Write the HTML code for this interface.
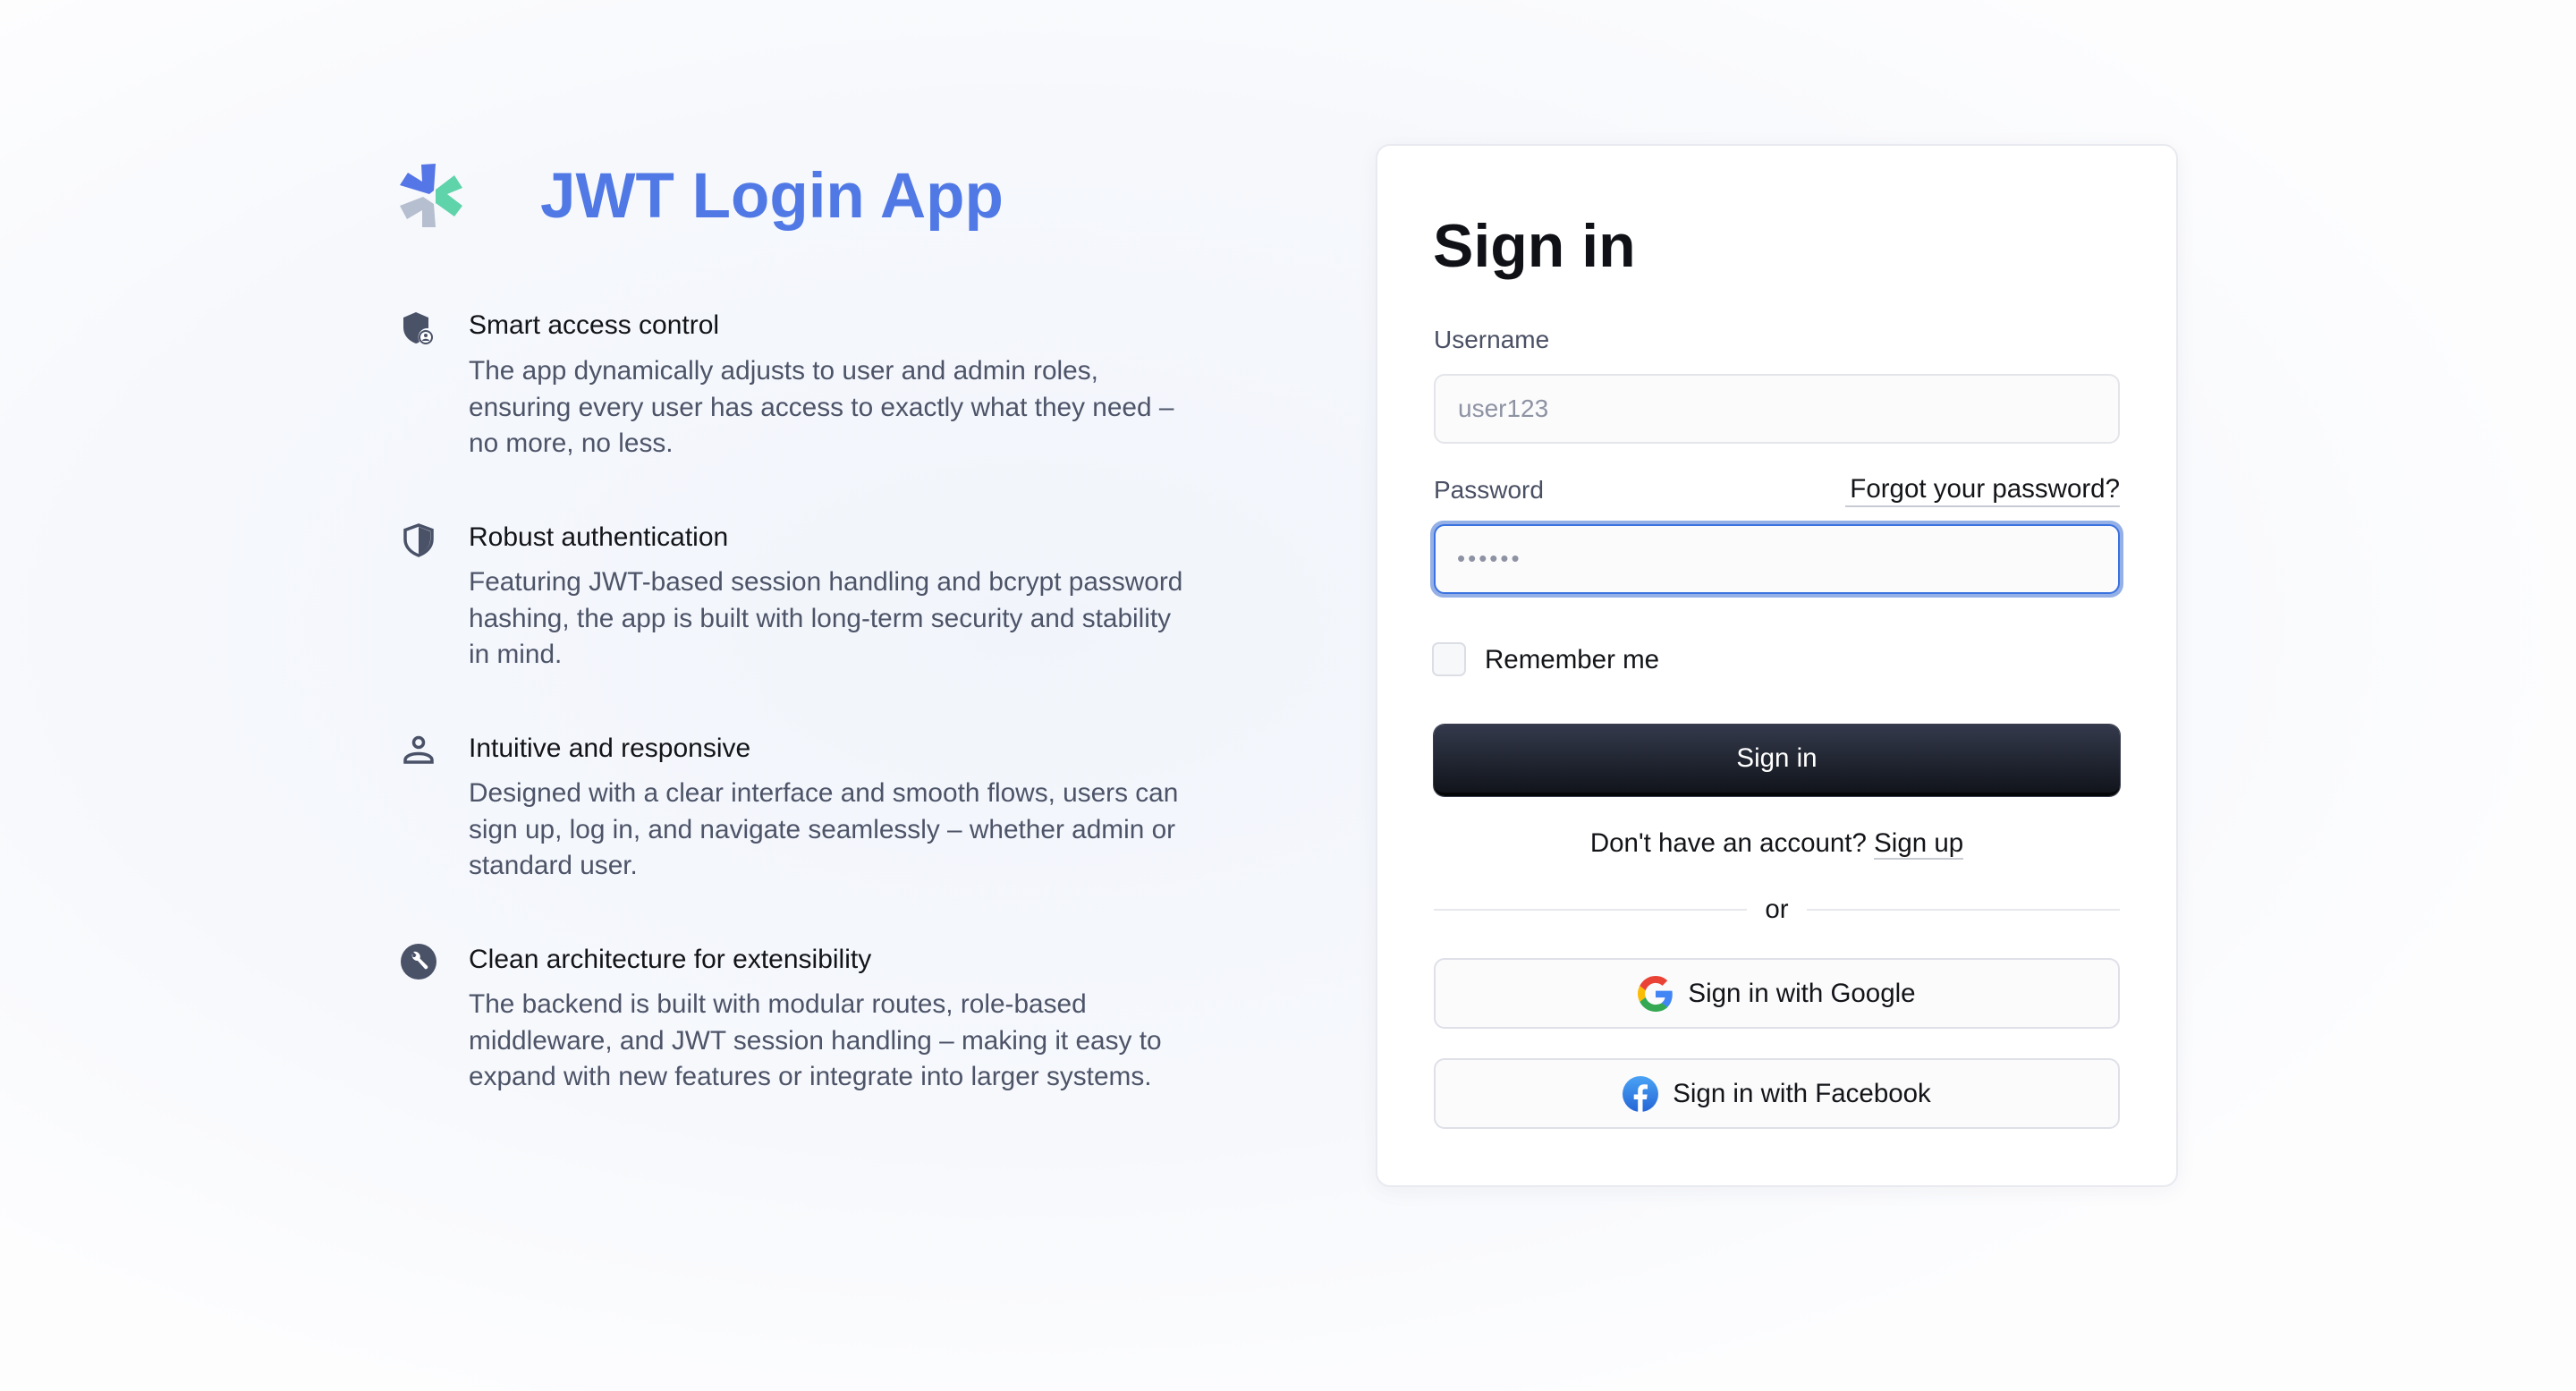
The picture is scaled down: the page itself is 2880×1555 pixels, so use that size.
<!DOCTYPE html>
<html><head><meta charset="utf-8"><style>
*{margin:0;padding:0;box-sizing:border-box}
html,body{width:2880px;height:1555px;overflow:hidden}
body{font-family:"Liberation Sans",sans-serif;background:radial-gradient(ellipse 60% 60% at 40% 45%,#f1f5fb 0%,#f6f8fc 60%,#fdfdfe 100%);position:relative;color:#111318}
.a{position:absolute}
.h{font-size:30px;color:#121418;left:524px}
.p{font-size:29.8px;color:#4d5468;line-height:40.5px;left:524px}
.ic{left:448px;width:40px;height:40px}
.card{left:1538px;top:161px;width:897px;height:1166px;background:#fff;border:2px solid #e8eaef;border-radius:16px;box-shadow:0 4px 24px rgba(30,40,80,.05)}
.lbl{font-size:28px;color:#4a5064;left:1603px}
.inp{left:1603px;width:767px;height:78px;border:2px solid #e4e5ea;border-radius:12px;background:#fbfbfc;font-size:28px;color:#8e93a3;padding-left:25px;line-height:74px}
.btn2{left:1603px;width:767px;height:79px;border:2px solid #dfe0e8;border-radius:12px;background:#fbfbfc;font-size:29.5px;color:#121418;display:flex;align-items:center;justify-content:center;gap:16px}
</style></head><body>
<svg class="a" style="left:430px;top:170px" width="100" height="100" viewBox="0 0 100 100">
<polygon fill="#5576e6" points="41,14 57,13 55,43 50,47 17,37 26,23 42,33"/>
<polygon fill="#5fd3aa" points="57,42 78,26 87,40 70,47 87,60 78,72 57,57"/>
<polygon fill="#b6bfcf" points="17,60 43,50 55,58 57,84 42,84 42,65 25,75"/>
</svg>
<div class="a" style="left:604px;top:179px;font-size:71px;font-weight:bold;color:#5179e6">JWT Login App</div>

<svg class="a ic" style="top:347px" viewBox="0 0 40 40"><path fill="#4a5268" d="M17 2 L3 8 V19 C3 28 9 34 17 37 C19 36.5 20 36 21 35 A10 10 0 0 1 31 20 V8 Z"/><circle cx="28" cy="30" r="8" fill="#4a5268"/><circle cx="28" cy="30" r="6" fill="#fff"/><circle cx="28" cy="28" r="2" fill="#4a5268"/><path fill="#4a5268" d="M24 34 C24 31 32 31 32 34 Z"/></svg>
<div class="a h" style="top:347px">Smart access control</div>
<div class="a p" style="top:395px">The app dynamically adjusts to user and admin roles,<br>ensuring every user has access to exactly what they need –<br>no more, no less.</div>

<svg class="a ic" style="top:584px" viewBox="0 0 40 40"><path fill="none" stroke="#4a5268" stroke-width="3.5" d="M20 3 L5 8.5 V19 C5 28 12 34 20 37 C28 34 35 28 35 19 V8.5 Z"/><path fill="#4a5268" d="M20 5 L33 10 V19 C33 27 27 33 20 35 Z"/></svg>
<div class="a h" style="top:584px">Robust authentication</div>
<div class="a p" style="top:631px">Featuring JWT-based session handling and bcrypt password<br>hashing, the app is built with long-term security and stability<br>in mind.</div>

<svg class="a ic" style="top:819px" viewBox="0 0 40 40"><circle cx="20" cy="11" r="5.5" fill="none" stroke="#4a5268" stroke-width="3.5"/><path fill="none" stroke="#4a5268" stroke-width="3.5" d="M5 33 V31 C5 26 12 23.5 20 23.5 C28 23.5 35 26 35 31 V33 Z"/></svg>
<div class="a h" style="top:820px">Intuitive and responsive</div>
<div class="a p" style="top:867px">Designed with a clear interface and smooth flows, users can<br>sign up, log in, and navigate seamlessly – whether admin or<br>standard user.</div>

<svg class="a ic" style="top:1055px" viewBox="0 0 40 40"><circle cx="20" cy="20" r="20" fill="#4a5268"/><path fill="#fff" d="M13 11 A6 6 0 0 0 19 19 L27 28 A2.2 2.2 0 0 0 30 25 L21.5 16.5 A6 6 0 0 0 14 9 L17.5 12.5 L16 15 L13.5 15 Z"/></svg>
<div class="a h" style="top:1056px">Clean architecture for extensibility</div>
<div class="a p" style="top:1103px">The backend is built with modular routes, role-based<br>middleware, and JWT session handling – making it easy to<br>expand with new features or integrate into larger systems.</div>

<div class="a card"></div>
<div class="a" style="left:1602px;top:236px;font-size:68px;font-weight:bold;color:#0f1116">Sign in</div>
<div class="a lbl" style="top:364px">Username</div>
<div class="a inp" style="top:418px">user123</div>
<div class="a lbl" style="top:532px">Password</div>
<div class="a" style="left:2063px;top:530px;font-size:29.5px;color:#121418;border-bottom:2px solid #c9cbd3;padding-bottom:1px;width:307px;text-align:right">Forgot your password?</div>
<div class="a" style="left:1599px;top:582px;width:775px;height:86px;border-radius:15px;background:#94b0e6"></div>
<div class="a" style="left:1603px;top:586px;width:767px;height:78px;border:2px solid #3a72e0;border-radius:12px;background:#fbfbfc;padding-left:24px;line-height:72px;font-size:26px;color:#8e93a3;letter-spacing:3px">••••••</div>
<div class="a" style="left:1601px;top:718px;width:38px;height:38px;border:2px solid #dcdee6;border-radius:7px;background:#f7f8fa"></div>
<div class="a" style="left:1660px;top:721px;font-size:29.5px;color:#121418">Remember me</div>
<div class="a" style="left:1603px;top:810px;width:767px;height:80px;border-radius:12px;background:linear-gradient(#343a4c,#11141b);border-bottom:4px solid #050608;box-shadow:0 0 0 1px #3a3f50;color:#fff;font-size:29.5px;text-align:center;line-height:76px">Sign in</div>
<div class="a" style="left:1603px;width:767px;top:926px;text-align:center;font-size:29.5px;color:#121418">Don't have an account? <span style="border-bottom:2px solid #c9cbd3">Sign up</span></div>
<div class="a" style="left:1603px;top:1016px;width:350px;height:2px;background:#e7e8ec"></div>
<div class="a" style="left:2020px;top:1016px;width:350px;height:2px;background:#e7e8ec"></div>
<div class="a" style="left:1953px;width:67px;top:1000px;text-align:center;font-size:29.5px;color:#121418">or</div>
<div class="a btn2" style="top:1071px"><svg width="40" height="40" viewBox="0 0 48 48"><path fill="#EA4335" d="M24 9.5c3.5 0 6.6 1.2 9.1 3.6l6.8-6.8C35.8 2.4 30.3 0 24 0 14.6 0 6.6 5.4 2.7 13.3l7.9 6.2C12.5 13.7 17.8 9.5 24 9.5z"/><path fill="#4285F4" d="M46.5 24.5c0-1.6-.1-3.1-.4-4.5H24v9h12.7c-.6 2.9-2.2 5.4-4.7 7.1l7.7 6c4.5-4.2 6.8-10.4 6.8-17.6z"/><path fill="#FBBC05" d="M10.5 28.6c-.5-1.4-.8-3-.8-4.6s.3-3.2.8-4.6l-7.9-6.2C1 16.5 0 20.1 0 24s1 7.5 2.7 10.7l7.8-6.1z"/><path fill="#34A853" d="M24 48c6.5 0 11.9-2.1 15.9-5.8l-7.7-6c-2.2 1.5-5 2.3-8.2 2.3-6.2 0-11.5-4.2-13.4-9.9l-7.9 6.1C6.6 42.6 14.6 48 24 48z"/></svg>Sign in with Google</div>
<div class="a btn2" style="top:1183px"><svg width="40" height="40" viewBox="0 0 40 40"><defs><linearGradient id="fb" x1="0" y1="0" x2="0" y2="1"><stop offset="0" stop-color="#4aa3f5"/><stop offset="1" stop-color="#2466d6"/></linearGradient></defs><circle cx="20" cy="20" r="20" fill="url(#fb)"/><path fill="#fff" d="M22.5 40 V26 H27 L27.7 20.5 H22.5 V17 C22.5 15.5 23 14.4 25.2 14.4 H28 V9.5 C27.5 9.4 25.8 9.3 23.9 9.3 C19.9 9.3 17.2 11.7 17.2 16.2 V20.5 H12.7 V26 H17.2 V40 Z"/></svg>Sign in with Facebook</div>
</body></html>
